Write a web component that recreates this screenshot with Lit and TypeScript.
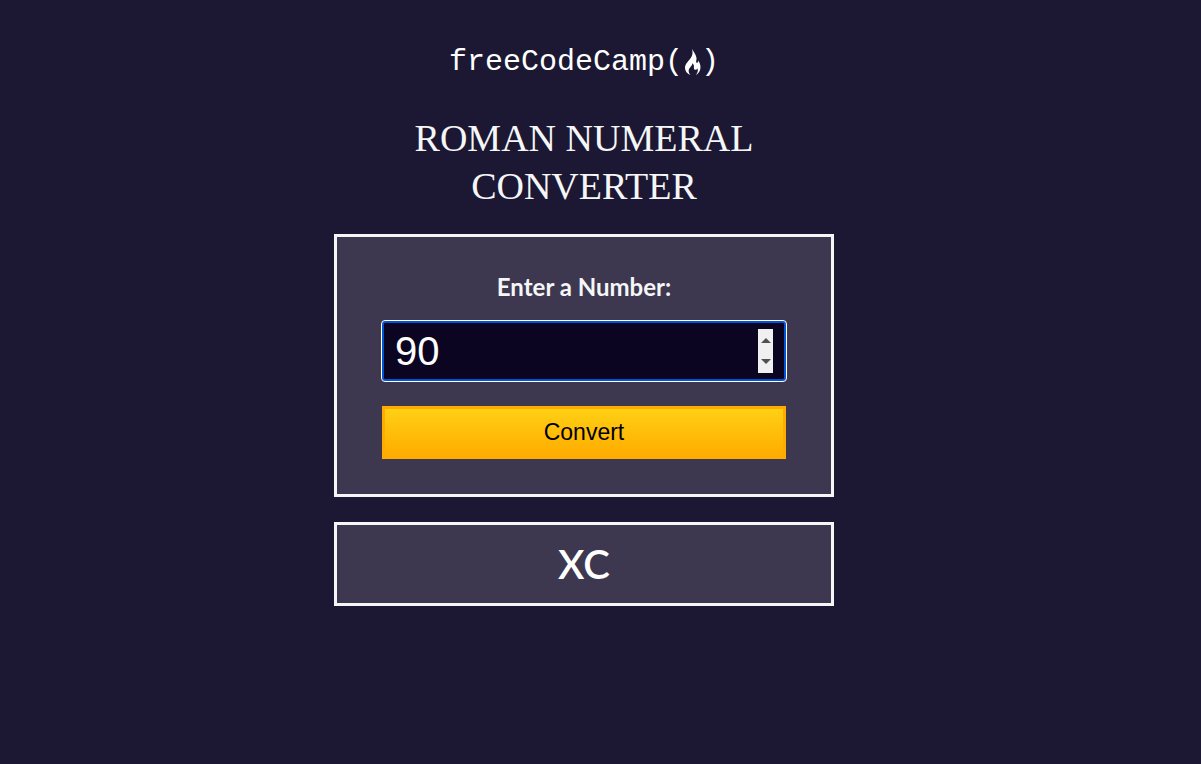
import { LitElement, html, css } from "lit";
import { customElement, state } from "lit/decorators.js";

const NUMERALS: [string, number][] = [
  ["M", 1000], ["CM", 900], ["D", 500], ["CD", 400],
  ["C", 100], ["XC", 90], ["L", 50], ["XL", 40],
  ["X", 10], ["IX", 9], ["V", 5], ["IV", 4], ["I", 1],
];

function toRoman(value: number): string {
  let rest = value;
  let out = "";
  for (const [symbol, size] of NUMERALS) {
    while (rest >= size) {
      out += symbol;
      rest -= size;
    }
  }
  return out;
}

@customElement("camp-logo")
export class CampLogo extends LitElement {
  static styles = css`
    :host {
      display: flex;
      align-items: center;
      font: 30px/36px "Liberation Mono", monospace;
      color: #ffffff;
    }
    .flame {
      width: 18px;
      height: 28px;
    }
  `;

  render() {
    return html`
      <span>freeCodeCamp(</span>
      <svg class="flame" viewBox="0 0 18 28" aria-hidden="true">
        <path
          fill="#ffffff"
          d="M9 1C10.500 3.500 13 6.500 13.500 10C13.700 12 12.700 13.300 13.400 14.500C14.200 15.300 15.300 14.300 15.200 12.400C17.300 15.500 18 18.500 17.200 21.500C16.500 24 15 25.700 12.800 27C14.800 24.500 15.300 22.600 14.400 20.500C13.800 21.500 13 22 12 21.800C10.300 21.300 11.300 19 10.700 17C10.400 16.200 10.100 15.700 9.500 15.200C9.400 17.700 5.900 19.700 5.700 22.500C5.600 24.300 6.200 25.800 7.600 27C4.500 25.900 2.200 23.500 2 20.300C1.700 15.500 6.500 12.700 8.600 8.500C9.800 6 9.700 3.500 9 1Z"
        />
      </svg>
      <span>)</span>
    `;
  }
}

@customElement("app-root")
export class AppRoot extends LitElement {
  @state() private value = "90";
  @state() private result = "XC";

  static styles = css`
    :host {
      display: block;
      box-sizing: border-box;
      min-height: 100vh;
      padding: 44px 33px 24px 0;
      background: #1c1833;
      color: #f5f6f7;
      font-family: Lato, sans-serif;
    }
    * {
      box-sizing: border-box;
    }
    main {
      display: flex;
      flex-direction: column;
      align-items: center;
    }
    h1 {
      max-width: 400px;
      margin: 34px 0 24px;
      font: 400 38px/48px "Liberation Serif", serif;
      text-align: center;
      text-transform: uppercase;
    }
    .panel {
      width: 100%;
      max-width: 500px;
      border: 3px solid #f5f6f7;
      background: #3d3850;
    }
    .form {
      display: flex;
      flex-direction: column;
      padding: 32px 45px 35px;
    }
    label {
      margin-bottom: 16px;
      font-size: 24px;
      line-height: 36px;
      font-weight: 700;
      text-align: center;
    }
    input {
      width: 100%;
      height: 60px;
      margin: 0 0 25px;
      padding: 6px 11px;
      border: 2px solid #0055d4;
      border-radius: 3px;
      outline: 1px solid #ffffff;
      background: #0b0522;
      color: #ffffff;
      font: 40px/44px "Liberation Sans", sans-serif;
    }
    input::-webkit-inner-spin-button {
      appearance: none;
      -webkit-appearance: none;
      width: 15px;
      height: 44px;
      opacity: 1;
      background: #f0f0f0
        url("data:image/svg+xml,%3Csvg xmlns='http://www.w3.org/2000/svg' width='15' height='44'%3E%3Cpath fill='%23505050' d='M3 14L8 9L13 14ZM3 30H13L8 35Z'/%3E%3C/svg%3E")
        no-repeat;
    }
    button {
      height: 53px;
      padding: 0 0 2px;
      border: 3px solid #ffac00;
      background: linear-gradient(#ffd014, #ffac00);
      color: #000000;
      font: 23px/30px "Liberation Sans", sans-serif;
      cursor: pointer;
    }
    .result {
      display: block;
      margin-top: 25px;
      padding: 15px;
      color: #ffffff;
      font-size: 40px;
      line-height: 48px;
      font-weight: 600;
      text-align: center;
    }
  `;

  private onInput(event: Event) {
    this.value = (event.target as HTMLInputElement).value;
  }

  private onSubmit(event: Event) {
    event.preventDefault();
    const n = Number(this.value);
    if (!Number.isInteger(n) || this.value === "") {
      this.result = "Please enter a valid number";
    } else if (n < 1) {
      this.result = "Please enter a number greater than or equal to 1";
    } else if (n > 3999) {
      this.result = "Please enter a number less than or equal to 3999";
    } else {
      this.result = toRoman(n);
    }
  }

  render() {
    return html`
      <main>
        <camp-logo></camp-logo>
        <h1>Roman Numeral Converter</h1>
        <form class="panel form" novalidate @submit=${this.onSubmit}>
          <label for="number">Enter a Number:</label>
          <input id="number" type="number" .value=${this.value} @input=${this.onInput} />
          <button type="submit">Convert</button>
        </form>
        <output class="panel result" for="number">${this.result}</output>
      </main>
    `;
  }
}
